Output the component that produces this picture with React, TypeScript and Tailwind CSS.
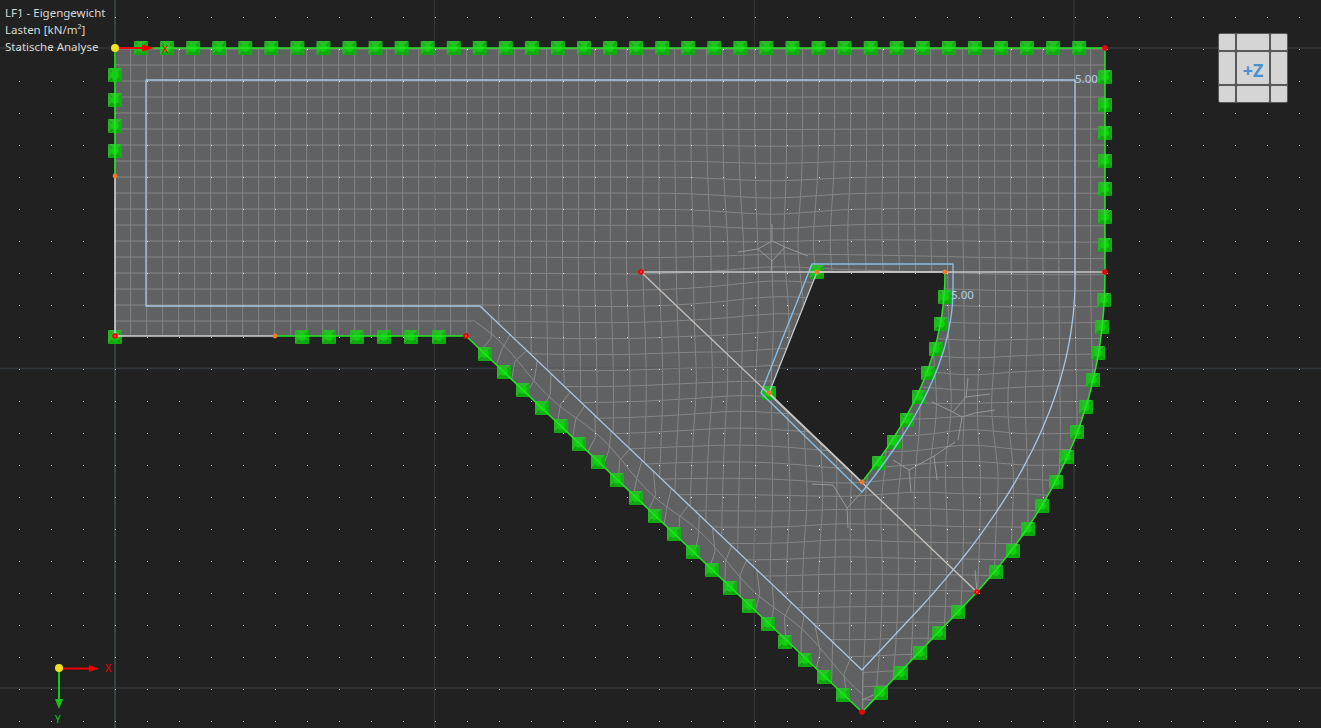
type P = [number, number];

const bez = (a: P, b: P, c: P, d: P, n = 40): P[] =>
  Array.from({ length: n + 1 }, (_, k) => {
    const t = k / n;
    const s = 1 - t;
    return [
      s * s * s * a[0] + 3 * s * s * t * b[0] + 3 * s * t * t * c[0] + t * t * t * d[0],
      s * s * s * a[1] + 3 * s * s * t * b[1] + 3 * s * t * t * c[1] + t * t * t * d[1],
    ] as P;
  });

const rightArc = bez([1105, 272], [1105, 400], [1060, 500], [977, 592]);
const holeArc = bez([945, 272], [945, 350], [915, 415], [862, 482]);
const plate: P[] = [[115,48],[1105,48],...rightArc,[862,712],[466,336],[115,336]];
const hole: P[] = [[817,272],...holeArc,[769,393]];
const gridArea: P[] = [[115,48],[1105,48],...rightArc,[862,712],[862,670],[480,306],[466,336],[115,336]];
const blueOuter: P[] = [[146,80],[1075,80],...bez([1075,280],[1075,400],[1010,510],[920,608]),[862,670],[480,306],[146,306]];
const blueInner: P[] = [[812,264],[953,264],...bez([953,288],[953,360],[915,425],[862,492]),[761,393]];

const toD = (pts: P[], close = false) =>
  "M" + pts.map((p) => `${p[0].toFixed(1)} ${p[1].toFixed(1)}`).join("L") + (close ? "Z" : "");

const smooth = (a: number, b: number, x: number) => {
  const t = Math.max(0, Math.min(1, (x - a) / (b - a)));
  return t * t * (3 - 2 * t);
};

const pulls: [number, number, number, number][] = [
  [772, 250, 44, 9],
  [966, 407, 36, 8],
  [915, 468, 32, 6],
  [842, 500, 36, 7],
  [1020, 475, 26, 4],
  [862, 695, 28, 5],
  [735, 385, 30, 4],
];

function warp(u: number, v: number): P {
  let x = u;
  let y = v;
  const w = smooth(170, 340, v) * smooth(460, 680, u);
  y += w * (2.5 * Math.sin((u - 300) / 110) + 1.5 * Math.sin(u / 60 + v / 80));
  x += w * (2.5 * Math.sin((v - 250) / 90) + 1.2 * Math.sin(v / 50 + u / 100));
  for (const [cx, cy, s, a] of pulls) {
    const r2 = (u - cx) ** 2 + (v - cy) ** 2;
    const g = (a / s) * Math.exp(-r2 / (2 * s * s));
    x += (cx - u) * g;
    y += (cy - v) * g;
  }
  return [x, y];
}

const meshLines: string[] = [];
for (let i = -1; i <= 63; i++) {
  const pts: P[] = [];
  for (let v = 40; v <= 730; v += 8) pts.push(warp(114.7 + 16 * i, v));
  meshLines.push(toD(pts));
}
for (let j = 0; j <= 43; j++) {
  const pts: P[] = [];
  for (let u = 100; u <= 1120; u += 8) pts.push(warp(u, 49 + 16 * j));
  meshLines.push(toD(pts));
}

const bandLines: string[] = [];
{
  const a: P = [466, 336];
  const b: P = [862, 712];
  const c: P = [480, 306];
  const d: P = [862, 670];
  const at = (f: number, o: number): P => {
    const px = a[0] + (b[0] - a[0]) * f;
    const py = a[1] + (b[1] - a[1]) * f;
    const qx = c[0] + (d[0] - c[0]) * f;
    const qy = c[1] + (d[1] - c[1]) * f;
    return [px + (qx - px) * o, py + (qy - py) * o];
  };
  const n = 26;
  for (let k = 1; k < n; k++) {
    const f = k / n;
    const j = 0.008 * Math.sin(k * 1.7);
    bandLines.push(toD([at(f, 0), at(f + j, 0.5), at(f - j, 1)]));
  }
  const mid: P[] = [];
  for (let k = 0; k <= n * 2; k++) {
    const f = k / (n * 2);
    mid.push(at(f, 0.52 + 0.1 * Math.sin(f * 24)));
  }
  bandLines.push(toD(mid));
}

const extraMesh: P[][] = [
  [[758,249],[772,241],[785,247]],
  [[758,249],[772,261],[785,247]],
  [[772,241],[772,224]],
  [[758,249],[738,252]],
  [[785,247],[808,256]],
  [[772,261],[771,272]],
  [[966,397],[953,412],[962,417]],
  [[962,417],[975,413],[995,410]],
  [[966,397],[990,394]],
  [[966,397],[968,378]],
  [[953,412],[932,402]],
  [[962,417],[958,440]],
  [[909,470],[934,456],[955,442]],
  [[909,470],[893,460]],
  [[909,470],[911,492]],
  [[934,456],[937,480]],
  [[833,485],[847,508],[862,492]],
  [[833,485],[812,484]],
  [[847,508],[848,528]],
  [[975,570],[977,592]],
  [[846,695],[862,700],[878,693]],
  [[862,700],[862,712]],
  [[862,700],[862,672]],
];

const dots: P[] = [];
for (let i = 0; i < 42; i++) for (let j = 0; j < 23; j++) dots.push([19 + 32 * i, 17 + 32 * j]);

const topSquares: P[] = Array.from({ length: 37 }, (_, k) => [141 + k * 26.06, 48] as P);
const squares: P[] = [
  ...topSquares,
  [115,75],[115,100],[115,126],[115,151],[115,337],
  [1105,77],[1105,105],[1105,133],[1105,161],[1105,189],[1105,217],[1105,245],
  [302,337],[329,337],[357,337],[384,337],[411,337],[439,337],
  [485,354],[504,372],[523,390],[542,408],[561,426],[579,444],[598,462],[617,480],[636,498],[655,516],[674,534],[693,552],[712,570],[730,588],[749,606],[768,624],[785,642],[805,660],[824,677],[843,695],
  [881,693],[901,673],[920,653],[939,633],[958,612],
  [1104,300],[1102,327],[1098,353],[1093,380],[1086,407],[1077,432],[1067,457],[1056,482],[1042,506],[1028,529],[1013,551],[996,572],
  [817,272],[769,393],
  [945,297],[941,324],[936,349],[928,373],[919,397],[907,420],[894,442],[879,463],
];

const redNodes: P[] = [[1105,48],[1105,272],[641,272],[466,336],[977,592],[862,712],[115,336]];
const orangeNodes: P[] = [[115,176],[275,336],[817,272],[945,272],[769,393],[862,482]];

function Square({ p }: { p: P }) {
  const [x, y] = p;
  const h = 7;
  return (
    <g transform={`translate(${x} ${y})`}>
      <polygon points={`${-h},${-h} ${h},${-h} 0,0`} fill="#2abc2a" />
      <polygon points={`${-h},${-h} ${-h},${h} 0,0`} fill="#22b822" />
      <polygon points={`${h},${-h} ${h},${h} 0,0`} fill="#12b012" />
      <polygon points={`${-h},${h} ${h},${h} 0,0`} fill="#0eaa0e" />
      <circle r="3.8" fill="#10d010" />
    </g>
  );
}

function Mesh() {
  return (
    <svg width="1321" height="728" viewBox="0 0 1321 728" className="block">
      <defs>
        <clipPath id="gridClip">
          <path clipRule="evenodd" d={toD(gridArea, true) + toD(hole, true)} />
        </clipPath>
      </defs>

      <g fill="none">
        <path d="M0 48H1321M0 368.5H1321M0 688H1321" stroke="#32373a" strokeWidth="1.5" />
        <path d="M434.5 0V728M754.5 0V728M1074 0V728" stroke="#33373a" strokeWidth="1.2" />
        <path d="M115 0V728" stroke="#344444" strokeWidth="2" />
      </g>

      <path d={toD(plate, true) + toD(hole, true)} fill="#606163" fillRule="evenodd" />

      <g clipPath="url(#gridClip)" fill="none" stroke="#868686" strokeWidth="1">
        {meshLines.map((d, i) => (
          <path key={i} d={d} />
        ))}
        {extraMesh.map((pts, i) => (
          <path key={i} d={toD(pts)} stroke="#989898" />
        ))}
      </g>
      <g fill="none" stroke="#8a8a8a" strokeWidth="1">
        {bandLines.map((d, i) => (
          <path key={i} d={d} />
        ))}
      </g>

      <path d="M754.5 272V680M1074 48V600M434.5 48V336M115 368H1110" stroke="#4a4d50" strokeWidth="1" opacity="0.3" fill="none" />

      <g fill="#e8e8e8">
        {dots.map(([x, y], i) => (
          <rect key={i} x={x} y={y} width="1" height="1" />
        ))}
      </g>

      {squares.map((p, i) => (
        <Square key={i} p={p} />
      ))}

      <g fill="none" strokeLinejoin="round">
        <path d={toD(blueOuter, true)} stroke="#a9c6e4" strokeWidth="1.3" />
        <path d={toD(blueInner, true)} stroke="#86bde4" strokeWidth="1.4" />
        <path d="M115 176V336H275" stroke="#cfcfcf" strokeWidth="1.6" />
        <path d="M641 272H1105" stroke="#c4c4c4" strokeWidth="1.4" />
        <path d="M641 272L977 592" stroke="#c4c0bc" strokeWidth="1.4" />
        <path d="M945 272H817L769 393L862 482" stroke="#c8c8c8" strokeWidth="1.3" />
        <path d="M115 48V176" stroke="#22e622" strokeWidth="1.6" />
        <path d="M115 48H1105V272" stroke="#22e622" strokeWidth="1.5" />
        <path d={toD(rightArc)} stroke="#22e622" strokeWidth="1.5" />
        <path d="M977 592L862 712L466 336H275" stroke="#1fe61f" strokeWidth="1.5" />
        <path d={toD(holeArc)} stroke="#22e622" strokeWidth="1.5" />
      </g>

      {redNodes.map(([x, y], i) => (
        <g key={i}>
          <circle cx={x} cy={y} r="2.8" fill="#f40000" />
          {i > 1 && i !== 5 && <rect x={x - 0.5} y={y - 0.5} width="1" height="1" fill="#ffd0d0" />}
        </g>
      ))}
      {orangeNodes.map(([x, y], i) => (
        <circle key={i} cx={x} cy={y} r="2.4" fill="#f07a28" />
      ))}

      <g>
        <path d="M115 48H143" stroke="#f00000" strokeWidth="2" />
        <polygon points="142,44.5 154,48 142,51.5" fill="#f00000" />
        <path d="M115 48V86" stroke="#10d010" strokeWidth="2" />
        <polygon points="112,76 118,76 115,87" fill="#10d010" />
        <circle cx="115" cy="48" r="4" fill="#f2e21e" />
      </g>

      <g>
        <path d="M59 668V702" stroke="#10d010" strokeWidth="2" />
        <polygon points="55,699 63,699 59,709" fill="#10c810" />
        <path d="M59 668.5H91" stroke="#f00000" strokeWidth="2" />
        <polygon points="89,665 99,668.5 89,672" fill="#f00000" />
        <circle cx="59" cy="668" r="4" fill="#f2e21e" />
      </g>
    </svg>
  );
}

function Cube() {
  const cell = "bg-[#d5d5d5] rounded-[1px]";
  return (
    <div className="absolute left-[1218px] top-[33px] grid grid-cols-[16px_32px_16px] grid-rows-[16px_32px_16px] gap-[2px] rounded-[2px] bg-[#595959] p-[1px]">
      <div className={cell} />
      <div className={cell} />
      <div className={cell} />
      <div className={cell} />
      <div className={`${cell} flex items-center justify-center pt-[3px] text-[18px] leading-none font-bold text-[#4a8fd0]`}>+Z</div>
      <div className={cell} />
      <div className={cell} />
      <div className={cell} />
      <div className={cell} />
    </div>
  );
}

export default function App() {
  return (
    <div
      className="relative h-[728px] w-full overflow-hidden bg-[#212121]"
      style={{ fontFamily: '"Noto Sans", "Open Sans", sans-serif' }}
    >
      <Mesh />

      <div className="absolute left-[5px] top-[4px] flex flex-col text-[11.5px] leading-[17px] text-[#d8d8d8]">
        <span>LF1 - Eigengewicht</span>
        <span>Lasten [kN/m²]</span>
        <span>Statische Analyse</span>
      </div>

      <span className="absolute left-[162px] top-[41px] text-[11px] leading-[16px] text-[#f00000]">X</span>
      <span className="absolute left-[105px] top-[660px] text-[11px] leading-[16px] text-[#f00000]">X</span>
      <span className="absolute left-[55px] top-[711px] text-[10px] leading-[16px] text-[#10d010]">Y</span>

      <span className="absolute left-[1075px] top-[71px] text-[11.5px] leading-[16px] text-[#b4d0ee]">5.00</span>
      <span className="absolute left-[951px] top-[287px] text-[11.5px] leading-[16px] text-[#b4d0ee]">5.00</span>

      <Cube />
    </div>
  );
}
